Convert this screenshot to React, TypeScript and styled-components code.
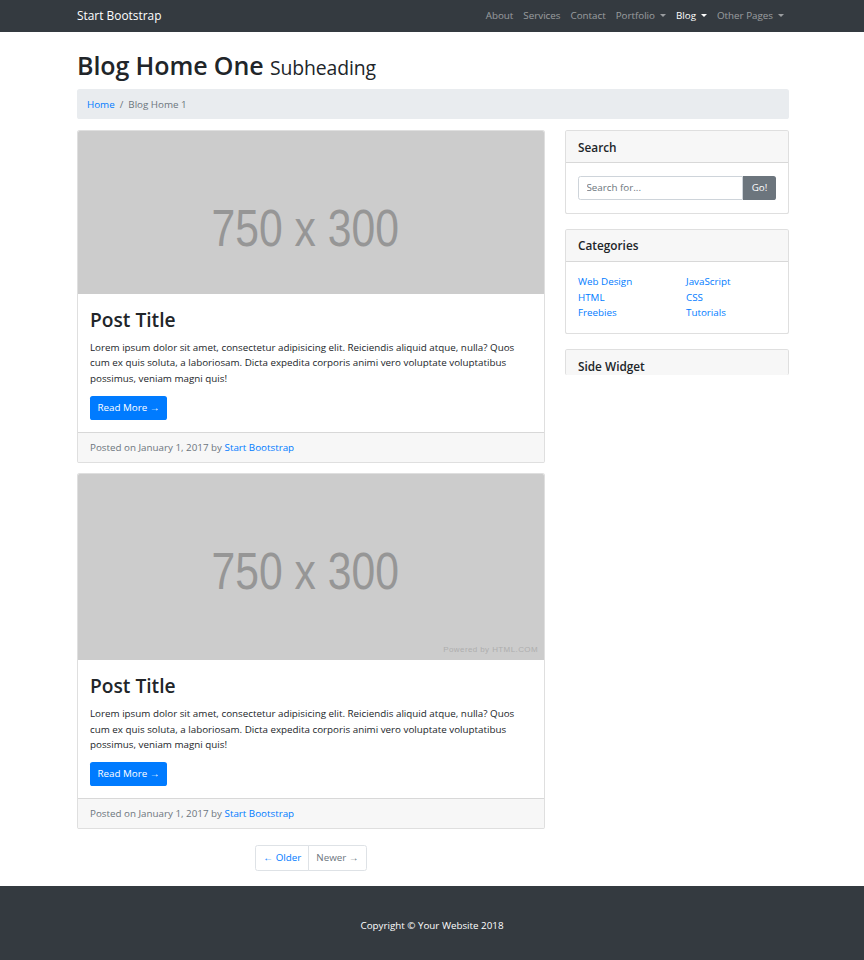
import React from "react";
import styled, { createGlobalStyle } from "styled-components";

const Global = createGlobalStyle`
  * { box-sizing: border-box; }
  html, body { margin: 0; padding: 0; background: #fff; }
  body {
    font-family: "Open Sans", "Noto Sans", "Liberation Sans", sans-serif;
    font-size: 9.8px;
    line-height: 15.4px;
    color: #212529;
  }
  a { text-decoration: none; color: #007bff; }
`;

const Nav = styled.nav`
  background: #343a40;
  height: 32px;
`;

const Container = styled.div`
  width: 714px;
  padding-left: 2px;
  margin: 0 auto;
`;

const NavInner = styled(Container)`
  height: 32px;
  display: flex;
  align-items: center;
  justify-content: space-between;
  padding-bottom: 1px;
`;

const Brand = styled.a`
  color: #fff;
  font-size: 11.9px;
  line-height: 15px;
`;

const NavList = styled.ul`
  list-style: none;
  margin: 0;
  padding: 0;
  display: flex;
  align-items: center;
`;

const NavLink = styled.a<{ $active?: boolean }>`
  display: block;
  padding: 4px 5px;
  color: ${(p) => (p.$active ? "#fff" : "rgba(255,255,255,0.5)")};
  font-size: 9.8px;
`;

const Caret = styled.span`
  display: inline-block;
  margin-left: 5px;
  vertical-align: 2px;
  border-top: 3px solid;
  border-left: 3px solid transparent;
  border-right: 3px solid transparent;
`;

const Title = styled.h1`
  margin: 18px 0 9px;
  height: 30px;
  font-size: 25px;
  line-height: 30px;
  font-weight: 600;
  letter-spacing: -0.1px;
`;

const Sub = styled.small`
  font-size: 19.4px;
  font-weight: 400;
`;

const Breadcrumb = styled.ol`
  list-style: none;
  margin: 0 0 11px;
  padding: 7.5px 10px;
  background: #e9ecef;
  border-radius: 2.6px;
  display: flex;
  height: 30px;
  font-size: 9.8px;
  color: #6c757d;
`;

const Crumb = styled.li<{ $first?: boolean }>`
  ${(p) =>
    !p.$first &&
    `&::before { content: "/"; padding: 0 5px; color: #6c757d; }`}
`;

const Row = styled.div`
  display: flex;
  gap: 20px;
  align-items: flex-start;
`;

const Main = styled.div`
  width: 468px;
  display: flex;
  flex-direction: column;
`;

const Side = styled.div`
  width: 224px;
  display: flex;
  flex-direction: column;
  gap: 15px;
`;

const Card = styled.div<{ $clip?: number }>`
  border: 1px solid rgba(0, 0, 0, 0.125);
  border-radius: 2.6px;
  background: #fff;
  overflow: hidden;
  ${(p) => (p.$clip ? `height: ${p.$clip}px; border-bottom: none;` : "")}
`;

const PostCard = styled(Card)`
  margin-bottom: 10px;
`;

const ImageClip = styled.div<{ $h: number }>`
  height: ${(p) => p.$h}px;
  overflow: hidden;
  margin: -1px -1px 0;
`;

const Placeholder = styled.div`
  position: relative;
  height: 187px;
  background: #cccccc;
  display: flex;
  align-items: center;
  justify-content: center;
  padding: 8px 12px 0 0;
`;

const PlaceholderText = styled.span`
  display: inline-block;
  font-family: "Liberation Sans", Arial, sans-serif;
  font-size: 52px;
  line-height: 60px;
  color: #969696;
  transform: scaleX(0.82);
`;

const Powered = styled.span`
  position: absolute;
  right: 7px;
  bottom: 5px;
  font-family: "Liberation Sans", Arial, sans-serif;
  font-size: 8px;
  line-height: 10px;
  letter-spacing: 0.4px;
  color: #aeaeae;
`;

const CardBody = styled.div`
  padding: 14px 12px 12px;
`;

const PostTitle = styled.h2`
  margin: 0 0 8px;
  font-size: 19.2px;
  line-height: 24px;
  font-weight: 600;
`;

const Text = styled.p`
  margin: 0 0 10px;
  font-size: 9.8px;
  line-height: 15.4px;
`;

const PrimaryBtn = styled.a`
  display: inline-block;
  background: #007bff;
  color: #fff;
  border-radius: 2.6px;
  padding: 4px 7.5px;
  font-size: 9.8px;
  line-height: 16px;
`;

const CardFooter = styled.div`
  background: #f7f7f7;
  border-top: 1px solid rgba(0, 0, 0, 0.125);
  padding: 7px 12px;
  height: 30px;
  color: #6c757d;
  font-size: 9.8px;
  line-height: 15.4px;
`;

const Pager = styled.ul`
  list-style: none;
  padding: 0;
  margin: 6px 0 15px;
  display: flex;
  justify-content: center;
`;

const PageLink = styled.li<{ $disabled?: boolean; $first?: boolean }>`
  border: 1px solid #dee2e6;
  ${(p) => (!p.$first ? "margin-left: -1px;" : "")}
  border-radius: ${(p) => (p.$first ? "2.6px 0 0 2.6px" : "0 2.6px 2.6px 0")};
  padding: 4px 7px;
  font-size: 9.8px;
  line-height: 16px;
  color: ${(p) => (p.$disabled ? "#6c757d" : "#007bff")};
`;

const CardHeader = styled.div`
  background: #f7f7f7;
  border-bottom: 1px solid rgba(0, 0, 0, 0.125);
  padding: 7.5px 12px;
  height: 32px;
`;

const H5 = styled.h5`
  margin: 0;
  font-size: 11.8px;
  line-height: 16px;
  font-weight: 600;
`;

const SearchBody = styled.div`
  padding: 12.8px 12px;
  display: flex;
`;

const Input = styled.input`
  flex: 1;
  min-width: 0;
  height: 24px;
  border: 1px solid #ced4da;
  border-radius: 2.6px 0 0 2.6px;
  padding: 0 7.5px;
  font-family: inherit;
  font-size: 9.8px;
  color: #495057;
  &::placeholder { color: #6c757d; }
`;

const GoBtn = styled.button`
  width: 33px;
  height: 24px;
  border: none;
  background: #6c757d;
  color: #fff;
  border-radius: 0 2.6px 2.6px 0;
  font-family: inherit;
  font-size: 9.8px;
  padding: 0;
`;

const CatBody = styled.div`
  padding: 12.8px 12px;
  display: grid;
  grid-template-columns: 108px 1fr;
`;

const CatList = styled.ul`
  list-style: none;
  margin: 0;
  padding: 0;
  font-size: 9.8px;
  line-height: 15.4px;
`;

const Footer = styled.footer`
  background: #343a40;
  height: 74px;
  padding-top: 32px;
  text-align: center;
  color: #fff;
  font-size: 9.8px;
  line-height: 15.4px;
`;

const post =
  "Lorem ipsum dolor sit amet, consectetur adipisicing elit. Reiciendis aliquid atque, nulla? Quos cum ex quis soluta, a laboriosam. Dicta expedita corporis animi vero voluptate voluptatibus possimus, veniam magni quis!";

function Post({ imgH, powered }: { imgH: number; powered?: boolean }) {
  return (
    <PostCard>
      <ImageClip $h={imgH}>
        <Placeholder>
          <PlaceholderText>750 x 300</PlaceholderText>
          {powered && <Powered>Powered by HTML.COM</Powered>}
        </Placeholder>
      </ImageClip>
      <CardBody>
        <PostTitle>Post Title</PostTitle>
        <Text>{post}</Text>
        <PrimaryBtn href="#">Read More &rarr;</PrimaryBtn>
      </CardBody>
      <CardFooter>
        Posted on January 1, 2017 by <a href="#">Start Bootstrap</a>
      </CardFooter>
    </PostCard>
  );
}

export default function App() {
  return (
    <>
      <Global />
      <Nav>
        <NavInner>
          <Brand href="#">Start Bootstrap</Brand>
          <NavList>
            <li><NavLink href="#">About</NavLink></li>
            <li><NavLink href="#">Services</NavLink></li>
            <li><NavLink href="#">Contact</NavLink></li>
            <li><NavLink href="#">Portfolio<Caret /></NavLink></li>
            <li><NavLink href="#" $active>Blog<Caret /></NavLink></li>
            <li><NavLink href="#">Other Pages<Caret /></NavLink></li>
          </NavList>
        </NavInner>
      </Nav>
      <Container>
        <Title>
          Blog Home One <Sub>Subheading</Sub>
        </Title>
        <Breadcrumb>
          <Crumb $first><a href="#">Home</a></Crumb>
          <Crumb>Blog Home 1</Crumb>
        </Breadcrumb>
        <Row>
          <Main>
            <Post imgH={164} />
            <Post imgH={187} powered />
            <Pager>
              <PageLink $first><a href="#">&larr; Older</a></PageLink>
              <PageLink $disabled>Newer &rarr;</PageLink>
            </Pager>
          </Main>
          <Side>
            <Card>
              <CardHeader><H5>Search</H5></CardHeader>
              <SearchBody>
                <Input placeholder="Search for..." />
                <GoBtn>Go!</GoBtn>
              </SearchBody>
            </Card>
            <Card>
              <CardHeader><H5>Categories</H5></CardHeader>
              <CatBody>
                <CatList>
                  <li><a href="#">Web Design</a></li>
                  <li><a href="#">HTML</a></li>
                  <li><a href="#">Freebies</a></li>
                </CatList>
                <CatList>
                  <li><a href="#">JavaScript</a></li>
                  <li><a href="#">CSS</a></li>
                  <li><a href="#">Tutorials</a></li>
                </CatList>
              </CatBody>
            </Card>
            <Card $clip={26}>
              <CardHeader><H5>Side Widget</H5></CardHeader>
            </Card>
          </Side>
        </Row>
      </Container>
      <Footer>Copyright &copy; Your Website 2018</Footer>
    </>
  );
}
